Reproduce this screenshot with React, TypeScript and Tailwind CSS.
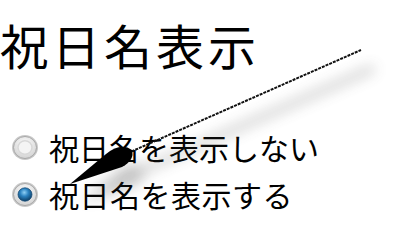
import React from "react"

const font = { fontFamily: '"Noto Sans CJK JP", "Noto Sans", sans-serif' }

function Radio({ checked }: { checked?: boolean }) {
  return (
    <svg width="28" height="27" viewBox="0 0 28 27" className="shrink-0">
      <defs>
        <radialGradient id={checked ? "rOn" : "rOff"} cx="50%" cy="35%" r="60%">
          <stop offset="0%" stopColor="#ffffff" />
          <stop offset="100%" stopColor="#d6d6d6" />
        </radialGradient>
        <radialGradient id="dot" cx="45%" cy="35%" r="65%">
          <stop offset="0%" stopColor="#8fd0f5" />
          <stop offset="45%" stopColor="#2b82c0" />
          <stop offset="100%" stopColor="#0d3f66" />
        </radialGradient>
      </defs>
      <ellipse cx="14" cy="13.5" rx="13" ry="12.5" fill="#c9c9c9" />
      <ellipse cx="14" cy="13.5" rx="11.5" ry="11" fill={`url(#${checked ? "rOn" : "rOff"})`} stroke="#a8a8a8" strokeWidth="1" />
      {checked ? (
        <ellipse cx="14" cy="13.5" rx="7" ry="6.7" fill="url(#dot)" stroke="#1d4f78" strokeWidth="0.8" />
      ) : (
        <ellipse cx="14" cy="13.5" rx="7" ry="6.7" fill="#f4f4f4" stroke="#d8d8d8" strokeWidth="1.5" />
      )}
    </svg>
  )
}

const head = "M70 184 L106 154 Q121 142 132 150 Q135 160 122 167 Z"

function Arrow() {
  return (
    <svg width="400" height="235" viewBox="0 0 400 235" className="absolute inset-0 pointer-events-none">
      <defs>
        <filter id="blur" x="-20%" y="-50%" width="140%" height="200%">
          <feGaussianBlur stdDeviation="7" />
        </filter>
      </defs>
      <g transform="translate(12 18)" filter="url(#blur)" opacity="0.3">
        <line x1="128" y1="153" x2="362" y2="50" stroke="#555" strokeWidth="7" />
        <path d={head} fill="#333" />
      </g>
      <line x1="128" y1="153" x2="361" y2="50" stroke="#111" strokeWidth="2" strokeDasharray="3 1" />
      <path d={head} fill="#000" />
    </svg>
  )
}

export default function App() {
  return (
    <div className="relative w-[400px] h-[235px] bg-white overflow-hidden text-black" style={font}>
      <div className="pt-5 text-[48px] leading-[48px] tracking-[4px]">祝日名表示</div>
      <div className="mt-[64px] flex flex-col gap-[17px] pl-[11px]">
        <label className="flex items-center gap-[10px] text-[30px] leading-[30px]">
          <Radio />
          <span>祝日名を表示しない</span>
        </label>
        <label className="flex items-center gap-[10px] text-[30px] leading-[30px] tracking-[0.5px]">
          <Radio checked />
          <span>祝日名を表示する</span>
        </label>
      </div>
      <Arrow />
    </div>
  )
}
